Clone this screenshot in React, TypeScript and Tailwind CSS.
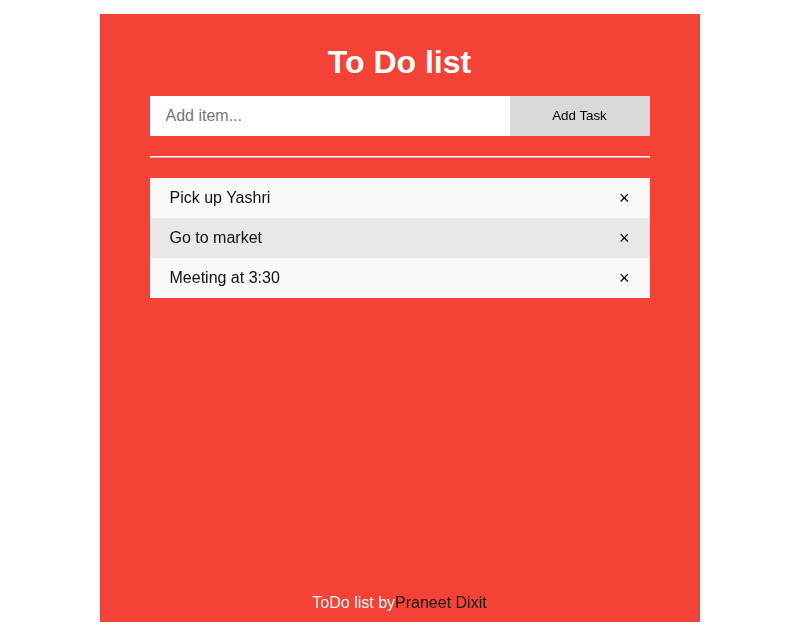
import { useState } from 'react'

const items = ['Pick up Yashri', 'Go to market', 'Meeting at 3:30']

export default function App() {
  const [tasks, setTasks] = useState<string[]>(items)
  const [text, setText] = useState('')

  const addTask = () => {
    if (!text.trim()) return
    setTasks([...tasks, text])
    setText('')
  }

  return (
    <div className="min-h-screen bg-white pt-[14px] font-['Liberation_Sans',Arial,sans-serif]">
      <div className="mx-auto flex h-[608px] w-[600px] flex-col bg-[#f44336] px-[50px] pt-[28px]">
        <h1 className="text-center text-[32px] font-bold leading-[40px] text-white">To Do list</h1>

        <div className="mt-[14px] flex h-10">
          <input
            autoFocus
            value={text}
            onChange={(e) => setText(e.target.value)}
            placeholder="Add item..."
            className="h-10 flex-1 bg-white px-4 text-base text-black caret-black outline-none placeholder:text-[#757575]"
          />
          <button
            onClick={addTask}
            className="h-10 w-[140px] bg-[#d9d9d9] text-[13.33px] text-black"
          >
            Add Task
          </button>
        </div>

        <div className="mt-5 h-[2px] border-t border-b border-t-white border-b-[#e9a9a3]" />

        <ul className="mt-5">
          {tasks.map((t, i) => (
            <li
              key={i}
              className={`flex h-10 items-center justify-between pl-5 pr-5 text-base text-[#111] ${
                i % 2 === 0 ? 'bg-[#f9f9f9]' : 'bg-[#e8e8e8]'
              }`}
            >
              <span>{t}</span>
              <span
                className="cursor-pointer text-[18px] leading-none text-black"
                onClick={() => setTasks(tasks.filter((_, j) => j !== i))}
              >
                ×
              </span>
            </li>
          ))}
        </ul>

        <div className="mt-auto pb-[9px] text-center text-base leading-5 text-white">
          ToDo list by<span className="text-[#1a1a1a]">Praneet Dixit</span>
        </div>
      </div>
    </div>
  )
}
